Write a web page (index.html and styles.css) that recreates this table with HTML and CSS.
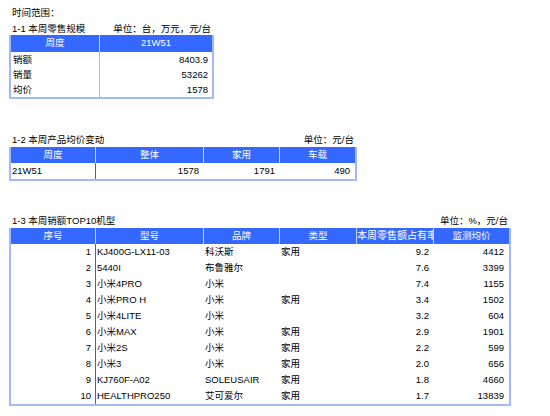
FILE: index.html
```html
<!DOCTYPE html>
<html lang="zh">
<head>
<meta charset="utf-8">
<link rel="stylesheet" href="styles.css">
</head>
<body>
<div class="page">
  <div class="line">时间范围：</div>

  <div class="title t1"><span>1-1 本周零售规模</span><span>单位：台，万元，元/台</span></div>
  <div class="tbl g1">
    <div class="h">周度</div><div class="h last">21W51</div>
    <div class="c l sep">销额</div><div class="c r">8403.9</div>
    <div class="c l sep">销量</div><div class="c r">53262</div>
    <div class="c l sep">均价</div><div class="c r">1578</div>
  </div>

  <div class="title t2"><span>1-2 本周产品均价变动</span><span>单位：元/台</span></div>
  <div class="tbl g2">
    <div class="h">周度</div><div class="h">整体</div><div class="h">家用</div><div class="h last">车载</div>
    <div class="c l sep dark">21W51</div><div class="c r">1578</div><div class="c r">1791</div><div class="c r">490</div>
  </div>

  <div class="title t3"><span>1-3 本周销额TOP10机型</span><span>单位：%，元/台</span></div>
  <div class="tbl g3">
    <div class="h">序号</div><div class="h">型号</div><div class="h">品牌</div><div class="h">类型</div><div class="h clip">本周零售额占有率</div><div class="h last">监测均价</div>

    <div class="c r sep dark">1</div><div class="c l">KJ400G-LX11-03</div><div class="c l">科沃斯</div><div class="c l">家用</div><div class="c r">9.2</div><div class="c r">4412</div>
    <div class="c r sep dark">2</div><div class="c l">5440I</div><div class="c l">布鲁雅尔</div><div class="c l"></div><div class="c r">7.6</div><div class="c r">3399</div>
    <div class="c r sep dark">3</div><div class="c l">小米4PRO</div><div class="c l">小米</div><div class="c l"></div><div class="c r">7.4</div><div class="c r">1155</div>
    <div class="c r sep dark">4</div><div class="c l">小米PRO H</div><div class="c l">小米</div><div class="c l">家用</div><div class="c r">3.4</div><div class="c r">1502</div>
    <div class="c r sep dark">5</div><div class="c l">小米4LITE</div><div class="c l">小米</div><div class="c l"></div><div class="c r">3.2</div><div class="c r">604</div>
    <div class="c r sep dark">6</div><div class="c l">小米MAX</div><div class="c l">小米</div><div class="c l">家用</div><div class="c r">2.9</div><div class="c r">1901</div>
    <div class="c r sep dark">7</div><div class="c l">小米2S</div><div class="c l">小米</div><div class="c l">家用</div><div class="c r">2.2</div><div class="c r">599</div>
    <div class="c r sep dark">8</div><div class="c l">小米3</div><div class="c l">小米</div><div class="c l">家用</div><div class="c r">2.0</div><div class="c r">656</div>
    <div class="c r sep dark">9</div><div class="c l">KJ760F-A02</div><div class="c l">SOLEUSAIR</div><div class="c l">家用</div><div class="c r">1.8</div><div class="c r">4660</div>
    <div class="c r sep dark">10</div><div class="c l">HEALTHPRO250</div><div class="c l">艾可爱尔</div><div class="c l">家用</div><div class="c r">1.7</div><div class="c r">13839</div>
  </div>
</div>
</body>
</html>
```

FILE: styles.css
```css
html, body {
  margin: 0;
  padding: 0;
  background: #ffffff;
}
body {
  font-family: "Liberation Sans", "Noto Sans CJK SC", sans-serif;
  font-size: 9.5px;
  color: #000000;
}
.page {
  padding: 4px 0 0 9px;
}
.line {
  height: 16px;
  line-height: 17px;
  padding-left: 3px;
}
.title {
  display: flex;
  justify-content: space-between;
  align-items: center;
  padding: 0 3px;
  box-sizing: border-box;
}
.t1 { width: 205px; height: 15px; }
.t2 { width: 348px; height: 16px; margin-top: 32px; }
.t3 { width: 502px; height: 16px; margin-top: 31px; }

.tbl {
  display: grid;
  border: 2px solid #a4b8ff;
  border-top-width: 0;
  box-sizing: border-box;
}
.g1 { width: 205px; grid-template-columns: 89px 112px; grid-template-rows: 17px repeat(3, 15px); }
.g2 { width: 348px; grid-template-columns: 85px 108px 76px 75px; grid-template-rows: 16px 16px; }
.g3 { width: 502px; grid-template-columns: 85px 108px 76px 77px 77px 75px; grid-template-rows: 16px repeat(10, 16px); }

.h {
  background: #3568ff;
  color: #ffffff;
  text-align: center;
  line-height: 16px;
  border-right: 1px solid #c4d2ff;
  white-space: nowrap;
  overflow: hidden;
}
.h.last { border-right: 0; }
.h.clip { text-align: left; font-size: 10px; }
.c {
  line-height: 16px;
  white-space: nowrap;
  overflow: hidden;
  box-sizing: border-box;
}
.c.l { text-align: left; padding-left: 1px; }
.c.r { text-align: right; padding-right: 5px; }
.c.sep { border-right: 1px solid #a4b8ff; }
.c.sep.dark { border-right: 1px solid #2f5cff; }
.g1 .c { line-height: 15px; }
.g1 .c.l { padding-left: 2px; }
.g1 .c.r { padding-right: 4px; }
.g3 .c.sep { padding-right: 4px; }
```
